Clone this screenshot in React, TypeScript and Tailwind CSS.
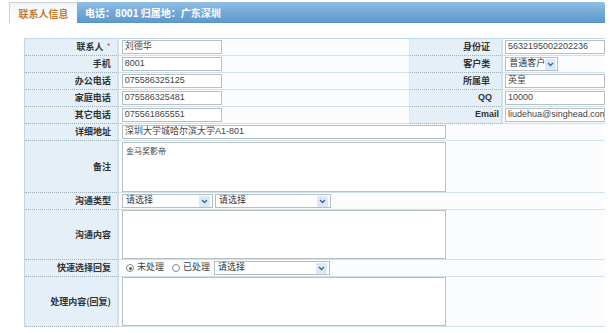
import React from 'react';

const LABEL_FONT = "font-['SimSun','Noto_Sans_CJK_SC',sans-serif]";
const VALUE_FONT = "font-['Liberation_Sans','Noto_Sans_CJK_SC',sans-serif]";

function Chevron() {
  return (
    <span className="flex h-[11px] w-[11px] shrink-0 items-center justify-center rounded-[1px] bg-[#dce8f4]">
      <svg width="7" height="5" viewBox="0 0 7 5">
        <path d="M1 1 L3.5 3.5 L6 1" stroke="#3a64a8" strokeWidth="1.4" fill="none" />
      </svg>
    </span>
  );
}

function Input({ value, w = 'w-[100px]' }: { value?: string; w?: string }) {
  return (
    <div
      className={`${w} ${VALUE_FONT} flex h-[14px] items-center overflow-hidden whitespace-nowrap border border-[#b4c0c6] bg-white pl-[2px] text-[9px] text-[#444]`}
    >
      {value}
    </div>
  );
}

function Select({ value, w }: { value: string; w: string }) {
  return (
    <div
      className={`${w} ${VALUE_FONT} flex h-[14px] items-center justify-between whitespace-nowrap border border-[#b4c0c6] bg-white pl-[3px] pr-[2px] text-[9px] text-[#333]`}
    >
      <span>{value}</span>
      <Chevron />
    </div>
  );
}

function Label({ children, className = '' }: { children: React.ReactNode; className?: string }) {
  return (
    <div
      className={`flex items-center justify-end whitespace-nowrap border-b border-dotted border-[#9fb0bd] bg-[#e4eff8] text-[9px] font-bold text-[#333] ${className}`}
    >
      {children}
    </div>
  );
}

const top = [
  { l: '联系人', v: '刘德华', rl: '身份证', rv: '5632195002202236', req: true },
  { l: '手机', v: '8001', rl: '客户类', rv: 'select' },
  { l: '办公电话', v: '075586325125', rl: '所属单', rv: '英皇' },
  { l: '家庭电话', v: '075586325481', rl: 'QQ', rv: '10000' },
  { l: '其它电话', v: '075561865551', rl: 'Email', rv: 'liudehua@singhead.com' },
];

export default function App() {
  return (
    <div className={`h-[333px] w-[611px] overflow-hidden bg-white pt-[2px] ${LABEL_FONT}`}>
      {/* tab header */}
      <div className="ml-[9px] flex h-[21px] w-[596px]">
        <div className="flex w-[68px] items-center justify-center border-l border-t border-[#c9d2d8] bg-gradient-to-b from-[#f1f4f6] to-white text-[10px] font-bold text-[#c57a2e]">
          联系人信息
        </div>
        <div className="flex flex-1 items-center rounded-tr-[2px] border-b border-[#5a93c6] bg-gradient-to-b from-[#92bfe4] via-[#74a9d8] to-[#5e9acd] pl-[8px] text-[10px] font-bold text-white">
          电话：8001 归属地：广东深圳
        </div>
      </div>

      {/* form table */}
      <div className="ml-[24px] mt-[15px] w-[581px] border-l border-t border-[#c2d7e4]">
        {top.map((r) => (
          <div key={r.l} className="flex h-[17px]">
            <Label className="w-[92px] pr-[6px]">
              {r.l}
              {r.req && <span className="ml-[3px] font-normal text-[#e05a6a]">*</span>}
            </Label>
            <div className="flex w-[293px] items-center border-b border-l-2 border-[#d0e1ea] bg-[#fafcfd] pl-[3px]">
              <Input value={r.v} />
            </div>
            <Label
              className={`w-[92px] border-l border-l-solid border-l-[#d0e1ea] ${
                r.rl === 'Email'
                  ? "pr-[2px] font-['Liberation_Sans',sans-serif]"
                  : r.rl === 'QQ'
                    ? "pr-[9px] font-['Liberation_Sans',sans-serif]"
                    : 'pr-[11px]'
              }`}
            >
              {r.rl}
            </Label>
            <div className="flex w-[104px] items-center border-b border-l-2 border-[#d0e1ea] bg-[#fafcfd] pl-[2px]">
              {r.rv === 'select' ? (
                <Select value="普通客户" w="w-[53px]" />
              ) : (
                <Input value={r.rv} w="w-[102px]" />
              )}
            </div>
          </div>
        ))}

        <Row label="详细地址" h="h-[17px]">
          <Input value="深圳大学城哈尔滨大学A1-801" w="w-[324px]" />
        </Row>
        <Row label="备注" h="h-[52px]">
          <div className="h-[50px] w-[324px] border border-[#b4c0c6] bg-white px-[3px] pt-[2px] text-[8px] text-[#444]">
            金马奖影帝
          </div>
        </Row>
        <Row label="沟通类型" h="h-[17px]">
          <div className="flex gap-[2px]">
            <Select value="请选择" w="w-[91px]" />
            <Select value="请选择" w="w-[116px]" />
          </div>
        </Row>
        <Row label="沟通内容" h="h-[50px]">
          <div className="h-[49px] w-[324px] border border-[#b4c0c6] bg-white" />
        </Row>
        <Row label="快速选择回复" h="h-[17px]">
          <div className={`flex items-center text-[9px] text-[#444] ${VALUE_FONT}`}>
            <span className="ml-[4px] flex h-[8px] w-[8px] items-center justify-center rounded-full border border-[#7f8a90] bg-white">
              <span className="h-[3px] w-[3px] rounded-full bg-[#2f7a3a]" />
            </span>
            <span className="ml-[3px]">未处理</span>
            <span className="ml-[8px] h-[8px] w-[8px] rounded-full border border-[#7f8a90] bg-white" />
            <span className="ml-[3px]">已处理</span>
            <div className="ml-[4px]">
              <Select value="请选择" w="w-[116px]" />
            </div>
          </div>
        </Row>
        <Row label="处理内容(回复)" h="h-[50px]">
          <div className="h-[49px] w-[324px] border border-[#b4c0c6] bg-white" />
        </Row>
      </div>
    </div>
  );
}

function Row({ label, h, children }: { label: string; h: string; children: React.ReactNode }) {
  return (
    <div className={`flex ${h}`}>
      <Label className="w-[92px] pr-[6px]">{label}</Label>
      <div className="flex flex-1 items-center border-b border-l-2 border-[#d0e1ea] bg-[#fafcfd] pl-[3px]">
        {children}
      </div>
    </div>
  );
}
